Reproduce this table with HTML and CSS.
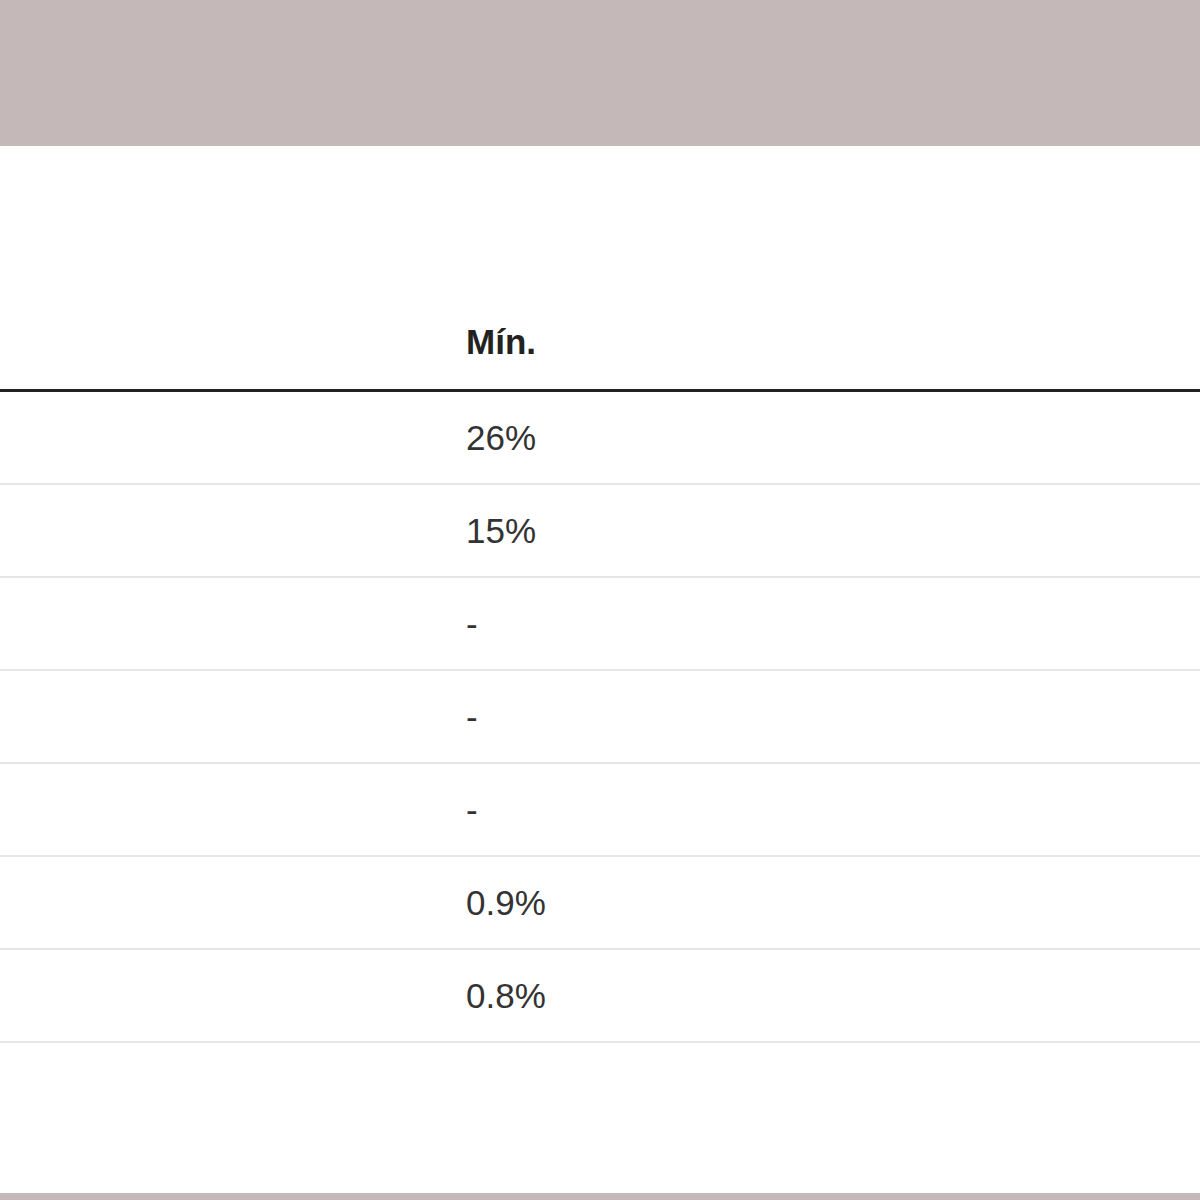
FILE: index.html
```html
<!DOCTYPE html>
<html lang="es">
<head>
<meta charset="utf-8">
<title>Tabla</title>
<link rel="stylesheet" href="styles.css">
</head>
<body>
<div class="band band-top"></div>
<main class="content">
  <table class="data">
    <thead>
      <tr><th class="c-label"></th><th class="c-min">Mín.</th></tr>
    </thead>
    <tbody>
      <tr><td class="c-label"></td><td class="c-min">26%</td></tr>
      <tr><td class="c-label"></td><td class="c-min">15%</td></tr>
      <tr><td class="c-label"></td><td class="c-min">-</td></tr>
      <tr><td class="c-label"></td><td class="c-min">-</td></tr>
      <tr><td class="c-label"></td><td class="c-min">-</td></tr>
      <tr><td class="c-label"></td><td class="c-min">0.9%</td></tr>
      <tr><td class="c-label"></td><td class="c-min">0.8%</td></tr>
    </tbody>
  </table>
</main>
<div class="band band-bottom"></div>
</body>
</html>
```
FILE: styles.css
```css
html, body {
  margin: 0;
  padding: 0;
  background: #ffffff;
}
body {
  font-family: "Liberation Sans", Arial, sans-serif;
  color: #333333;
  overflow: hidden;
}
.band {
  background: #c4b8b8;
}
.band-top {
  height: 146px;
}
.band-bottom {
  height: 40px;
}
.content {
  padding-bottom: 150px;
}
.data {
  width: 100%;
  border-collapse: collapse;
  font-size: 35px;
  line-height: 40px;
}
.data th {
  text-align: left;
  font-weight: bold;
  color: #222222;
  padding: 176px 0 27px 0;
  border-bottom: 3px solid #222222;
}
.data td {
  padding: 26px 0 25px 0;
  border-bottom: 2px solid #e6e6e6;
}
.c-label {
  width: 466px;
}
```
